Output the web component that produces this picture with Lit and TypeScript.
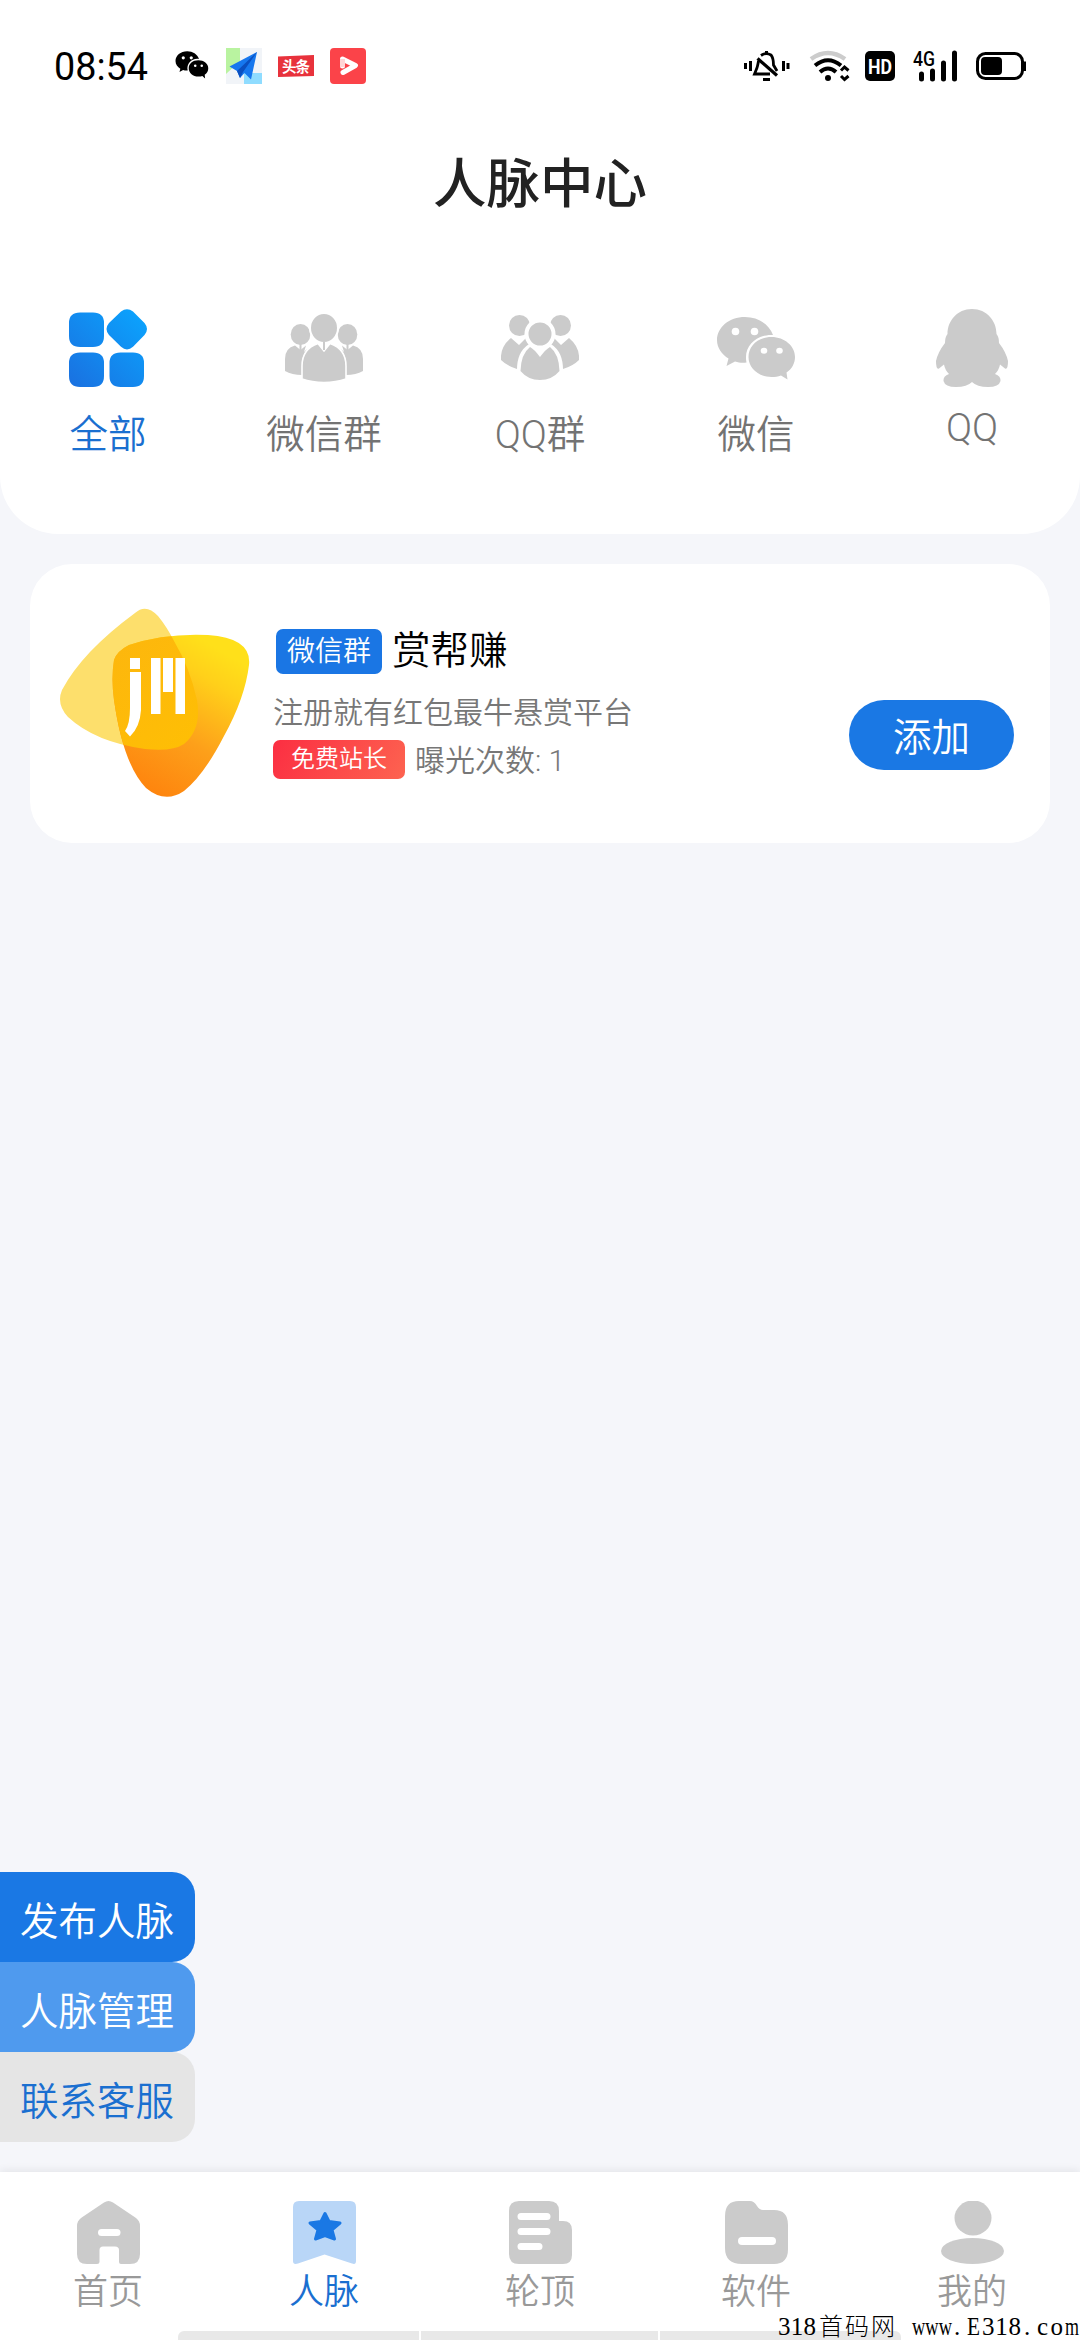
import { LitElement, html, css, svg } from "lit";
import { customElement, property } from "lit/decorators.js";

const ICONS: Record<string, any> = {
  all: svg`<svg viewBox="0 0 78 78" width="78" height="78"><defs><linearGradient id="g" x1="0" y1="1" x2="1" y2="0"><stop offset="0" stop-color="#1a70e0"/><stop offset="1" stop-color="#0aa6ff"/></linearGradient></defs><g fill="url(#g)"><path d="M11 3.500H24Q35 3.500 35 14V27Q35 38 24 38H11Q0 38 0 27V14Q0 3.500 11 3.500ZM11 43.500H24Q35 43.500 35 54V67Q35 78 24 78H11Q0 78 0 67V54Q0 43.500 11 43.500ZM51.500 43.500H64Q75 43.500 75 54V67Q75 78 64 78H51.500Q40.500 78 40.500 67V54Q40.500 43.500 51.500 43.500ZM52 2.500Q58 -2 64 2.500L75.500 14Q80.500 20 75.500 26L64 37.800Q58 43 52 37.800L40 26Q35 20 40 14Z"/></g></svg>`,
  group: svg`<svg viewBox="0 0 78 78" width="78" height="78" fill="#cbcbcb"><ellipse cx="15.500" cy="25.500" rx="9.800" ry="10.500"/><ellipse cx="62.500" cy="25.500" rx="9.800" ry="10.500"/><path d="M10 36.500L15.500 41L21 36.500L19 43L22 40Q17 47 17 55V66Q7 66 0 62V50Q0 39 10 36.500ZM68 36.500L62.500 41L57 36.500L59 43L56 40Q61 47 61 55V66Q71 66 78 62V50Q78 39 68 36.500Z"/><path d="M14.500 35h2v8h-2zM61.500 35h2v8h-2z"/><ellipse cx="39" cy="19" rx="14" ry="15" stroke="#fff" stroke-width="2"/><path d="M33 34.500L39 42L45 34.500Q61 40 61 57V70Q51 73.500 39 73.500T17 70V57Q17 40 33 34.500Z" stroke="#fff" stroke-width="1.600"/><path d="M38 33h2v8h-2z"/></svg>`,
  qqgroup: svg`<svg viewBox="0 0 78 78" width="78" height="78" fill="#cbcbcb"><circle cx="18.500" cy="16.500" r="10.500"/><circle cx="59.500" cy="16.500" r="10.500"/><path d="M10 29L18 36L25 29L34 40L16 60Q6 57 0 51Q-1 38 10 29ZM68 29L60 36L53 29L44 40L62 60Q72 57 78 51Q79 38 68 29Z"/><path d="M30 38L39 46L48 38Q59 45 58.500 62Q51 71 39 71T19.500 62Q19 45 30 38Z" stroke="#fff" stroke-width="7"/><path d="M29 38Q33 40 39 48Q45 40 49 38Q58 45 58.500 62Q51 71 39 71T19.500 62Q20 45 29 38Z"/><circle cx="39" cy="25" r="13.500" stroke="#fff" stroke-width="4"/></svg>`,
  wechat: svg`<svg viewBox="0 0 78 78" width="78" height="78"><g fill="#cbcbcb"><path d="M28 8C12 8 0 18.500 0 31C0 39 5 45.500 11.500 49.500L9.500 57L18 52.500C22 53.600 25 54.200 29.500 53.500C26 37 40 25 56 26C52 15 41 8 28 8Z"/><path d="M54.500 28C41 28 31.500 37 31.500 48C31.500 59 41.500 68 54.500 68C58 68 61 67.500 64 66.500L70.500 70.500L69.500 63.500C75 60 78 54 78 48C78 37 67.500 28 54.500 28Z"/></g><g fill="#fff"><circle cx="18.500" cy="22.500" r="3.800"/><circle cx="37.500" cy="22.500" r="3.800"/><ellipse cx="47" cy="41.700" rx="3.300" ry="3"/><ellipse cx="62.500" cy="41.700" rx="3.300" ry="3"/></g></svg>`,
  qq: svg`<svg viewBox="0 0 78 78" width="78" height="78" fill="#cbcbcb"><path d="M39 0C24 0 14.500 12 14.500 25Q12 28 12 34Q5 43 3 52Q3 61 6 59.500L11 55.500Q12 61 16 65Q10 67 10.500 72Q12 78 23 78Q34 78 39 73Q44 78 55 78Q66 78 67.500 72Q68 67 62 65Q66 61 67 55.500L72 59.500Q75 61 75 52Q73 43 66 34Q66 28 63.500 25C63.500 12 54 0 39 0Z"/></svg>`,
  home: svg`<svg viewBox="0 0 63 63" width="63" height="63"><path fill="#cbcbcb" d="M27 1.500Q31.500 -1.500 36 1.500L59 17Q63 20 63 25V53Q63 63 53 63H44Q42 63 42 61V49Q42 45.500 38 45.500H26Q22.500 45.500 22.500 49V61Q22.500 63 20 63H10Q0 63 0 53V25Q0 20 4 17Z"/><rect x="21" y="28" width="22.500" height="7" rx="3.500" fill="#fff"/></svg>`,
  mark: svg`<svg viewBox="0 0 63 63" width="63" height="63"><path fill="#b9d6f7" d="M6 0H57Q63 0 63 6V60Q63 64 59 62.500L31.500 53.500L5 62.500Q0 64 0 60V6Q0 0 6 0Z"/><path fill="#1a78e4" stroke="#1a78e4" stroke-width="3" stroke-linejoin="round" d="M32 12.500L36 20.500L47 22L39 28.800L41.500 38L32 34.500L22.500 38L25 28.800L17 22L28 20.500Z"/></svg>`,
  doc: svg`<svg viewBox="0 0 63 63" width="63" height="63"><path fill="#cbcbcb" d="M10 0H40Q50 0 50 10V20H54Q63 20 63 29V54Q63 63 54 63H10Q0 63 0 53V10Q0 0 10 0Z"/><path d="M12 15.500H38M12 30.500H38M12 45.500H30" stroke="#fff" stroke-width="7" stroke-linecap="round"/></svg>`,
  folder: svg`<svg viewBox="0 0 63 63" width="63" height="63"><path fill="#cbcbcb" d="M14 0H25Q29 0 32 5Q34.500 9 38 9H49Q63 9 63 24V48Q63 63 49 63H17Q0 63 0 47V15Q0 0 14 0Z"/><path d="M17 40H47" stroke="#fff" stroke-width="8" stroke-linecap="round"/></svg>`,
  user: svg`<svg viewBox="0 0 63 63" width="63" height="63" fill="#cbcbcb"><ellipse cx="32" cy="17" rx="18.500" ry="17.500"/><ellipse cx="31.500" cy="50" rx="31.500" ry="13"/></svg>`,
};

@customElement("status-bar")
class StatusBar extends LitElement {
  static styles = css`
    :host { display: flex; height: 132px; padding: 0 54px; align-items: center; justify-content: space-between; box-sizing: border-box; }
    svg { display: block; }
    .ui { font-family: Roboto, "Liberation Sans", sans-serif; }
    .cn { font-family: "Noto Sans CJK SC", sans-serif; font-weight: 700; }
  `;
  render() {
    return html`
      <svg width="320" height="50" viewBox="54 41 320 50">
        <text class="ui" x="54" y="79.500" font-size="38" font-weight="400" textLength="94" lengthAdjust="spacingAndGlyphs">08:54</text>
        <g transform="translate(175.500,48) scale(.42)"><path d="M28 8C12 8 0 18.500 0 31C0 39 5 45.500 11.500 49.500L9.500 57L18 52.500C22 53.600 27 54.200 29 53.500C25 37 40 23 56 26C52 15 41 8 28 8Z"/><path d="M54.500 29C41 29 31.500 37 31.500 48C31.500 59 41.500 68 54.500 68C58 68 61 67.500 64 66.500L70.500 72.500L69.500 63.500C75 60 78 54 78 48C78 37 67.500 29 54.500 29Z"/><g fill="#fff"><circle cx="18.500" cy="23.500" r="3.800"/><circle cx="37.500" cy="23.500" r="3.800"/><circle cx="47" cy="42" r="3"/><circle cx="62.500" cy="42" r="3"/></g></g>
        <rect x="226" y="48" width="36" height="36" fill="#f1f4f8"/><path d="M226 48h14v13l-14 13z" fill="#b9f3a0"/><path d="M244 73h18v11h-18z" fill="#8fdcff"/>
        <path d="M257 52L229.500 66.500L237 71L240 78L244.500 73L251 79.500Z" fill="#1677ee"/><path d="M257 52L237 71L240 78L243 72Z" fill="#0a4fc0"/>
        <path d="M278 56.500L314 55V76L278 77Z" fill="#e8323c"/><text class="cn" x="282" y="72" font-size="14.500" fill="#fff" textLength="28">头条</text>
        <rect x="330" y="48" width="36" height="36" rx="4" fill="#fb4349"/><path d="M342.500 66V59L355.500 65.500L343 72.500" fill="none" stroke="#fff" stroke-width="5" stroke-linejoin="round" stroke-linecap="round"/><path d="M342.500 59V67" fill="none" stroke="#ffd5d5" stroke-width="5"/>
      </svg>
      <svg width="290" height="50" viewBox="736 41 290 50" fill="none" stroke="#000">
        <path d="M745.500 63v6M750.500 61v10M783.500 61v10M788 63v6" stroke-width="3"/>
        <path d="M757.500 58.500L777 75.500" stroke-width="3.200"/><path d="M758.500 61Q757.500 67 756.500 69L754.500 74H770M761 55.500Q766 52 771 55Q773.500 58 773.500 65L777 71" stroke-width="2.800"/><path d="M766.500 51v4M763 79.500h7" stroke-width="3"/>
        <path d="M811 59Q828 47 845 59" stroke="#ccc" stroke-width="4.500"/><path d="M815 65.500Q828 55 841 65.500M820 72Q828 65 836 72" stroke-width="4"/><circle cx="828" cy="78" r="3" fill="#000" stroke="none"/><path d="M841 70.500L844.500 67L848.500 70.500M841 76L844.500 79.500L848.500 76" stroke-width="3"/>
        <rect x="865" y="51" width="30" height="30" rx="5" fill="#000" stroke="none"/><text class="ui" x="868" y="73.500" font-size="21" font-weight="700" fill="#fff" stroke="none" textLength="24" lengthAdjust="spacingAndGlyphs">HD</text>
        <text class="ui" x="913" y="66" font-size="20" font-weight="500" fill="#000" stroke="none" textLength="22" lengthAdjust="spacingAndGlyphs">4G</text>
        <path d="M921.500 74v5M932.500 71v8M943.500 63v16M954.500 53v26" stroke-width="5" stroke-linecap="round"/>
        <rect x="977.500" y="53.500" width="45" height="25" rx="8" stroke-width="3"/><rect x="981" y="57" width="21" height="18" rx="4" fill="#000" stroke="none"/><path d="M1024 61.500V71" stroke-width="4"/>
      </svg>`;
  }
}

@customElement("brand-logo")
class BrandLogo extends LitElement {
  static styles = css`:host { display: block; width: 190px; height: 190px; } svg { display: block; }`;
  render() {
    return html`<svg width="190" height="190" viewBox="60 608 190 190">
      <defs>
        <linearGradient id="a" x1=".8" y1=".1" x2=".35" y2="1"><stop offset="0" stop-color="#ffe01a"/><stop offset=".2" stop-color="#ffd01a"/><stop offset=".6" stop-color="#fda01a"/><stop offset="1" stop-color="#fe850e"/></linearGradient>
        <linearGradient id="b" x1="0" y1="0" x2=".8" y2="1"><stop offset="0" stop-color="#fdb60e"/><stop offset="1" stop-color="#ffc200"/></linearGradient>
        <path id="back" d="M135 613Q146 603 158 616Q167 627 174 641Q190 668 197 700Q202 729 184 744Q172 752 145 749Q95 742 68 717Q56 704 62 690Q82 652 135 613Z"/>
        <path id="front" d="M129 645Q165 633 208 635Q252 638 249 665Q245 698 224 736Q204 775 184 791Q165 804 146 788Q123 764 114 700Q111 678 114 660Q117 651 129 645Z"/>
        <clipPath id="c"><use href="#back"/></clipPath>
      </defs>
      <use href="#back" fill="#fddf6c"/><use href="#front" fill="url(#a)"/>
      <g clip-path="url(#c)"><use href="#front" fill="url(#b)"/></g>
      <g fill="#fff"><rect x="130" y="658" width="10" height="11"/><path d="M130 672H141V710Q140 727 130 736.500L125 731Q130 724 130 708Z"/><rect x="151" y="658" width="9.500" height="56"/><rect x="163" y="658" width="10" height="34"/><rect x="175.500" y="658" width="9.500" height="56"/></g>
    </svg>`;
  }
}

@customElement("icon-tab")
class IconTab extends LitElement {
  @property() icon = "";
  @property() label = "";
  static styles = css`
    :host { display: flex; flex: 1; flex-direction: column; align-items: center; color: var(--tab-color, #737373); }
    .icon { display: flex; }
    .label { margin-top: var(--tab-gap); font-size: var(--tab-size); line-height: 56px; white-space: nowrap; }
  `;
  render() {
    return html`<div class="icon">${ICONS[this.icon]}</div><div class="label">${this.label}</div>`;
  }
}

@customElement("app-root")
class AppRoot extends LitElement {
  static styles = css`
    :host { display: block; font-family: Roboto, "Noto Sans CJK SC", sans-serif; font-weight: 350; }
    .page { position: relative; display: flex; flex-direction: column; height: 2340px; overflow: hidden; background: #f5f6fa; }
    .header { height: 534px; background: #fff; border-radius: 0 0 58px 58px; }
    .title { margin: 0; height: 102px; line-height: 106px; text-align: center; font-size: 53.500px; font-weight: 500; color: #222; }
    .tabs { display: flex; padding-top: 75px; --tab-gap: 20px; --tab-size: 38.500px; }
    .active { --tab-color: #1a6fd0; }
    .raised { --tab-gap: 13px; }
    .card { display: flex; height: 279px; margin: 30px; padding: 44px 36px 0 30px; border-radius: 42px; background: #fff; box-sizing: border-box; }
    .info { flex: 1; margin-left: 23px; padding-top: 21px; }
    .row { display: flex; align-items: center; }
    .tag { width: 106px; height: 45px; margin-left: 3px; border-radius: 7px; background: #1a76e4; color: #fff; font-size: 28px; line-height: 46px; text-align: center; }
    .name { margin-left: 10px; font-size: 38.500px; line-height: 43px; color: #000; margin-top: -2px; }
    .desc { margin-top: 18px; font-size: 30px; line-height: 42px; color: #777; }
    .meta { margin-top: 6px; color: #777; font-size: 30px; line-height: 39px; }
    .meta span:last-child { position: relative; top: 1px; }
    .badge { width: 132px; height: 39px; margin-right: 10px; border-radius: 7px; background: linear-gradient(120deg, #fb2e42, #fd6350); color: #fff; font-size: 24px; text-align: center; }
    .add { width: 165px; height: 70px; margin-top: 92px; padding: 5px 0 0; border: 0; border-radius: 35px; background: #1a78e4; color: #fff; font: inherit; font-size: 38.500px; line-height: 65px; }
    .floats { position: absolute; left: 0; top: 1872px; width: 195px; }
    .float { height: 90px; padding-left: 20px; border-radius: 0 23px 23px 0; line-height: 100px; font-size: 38.500px; color: #fff; white-space: nowrap; box-sizing: border-box; }
    .primary { background: #1a78e4; }
    .soft { background: #4f9aee; }
    .plain { background: #e5e5e5; color: #1a6fd0; }
    .nav { display: flex; margin-top: auto; height: 168px; padding-top: 29px; background: #fff; box-shadow: 0 -2px 8px rgba(0, 0, 0, .07); box-sizing: border-box; --tab-gap: 1px; --tab-size: 35px; --tab-color: #999; }
    .nav .active { --tab-color: #1a6fd0; }
    .strip { position: absolute; left: 178px; bottom: 0; display: grid; grid-template-columns: 241px 237px 241px; gap: 2px; width: 723px; height: 9px; }
    .seg { background: #e8e8e8; }
    .seg:first-child { border-radius: 6px 0 0 0; }
    .seg:last-child { border-radius: 0 6px 0 0; }
    .mark { position: absolute; left: 778px; bottom: 0; display: block; font-family: "Liberation Serif", serif; font-weight: 400; }
    .cn { font-family: "Noto Sans CJK SC", sans-serif; font-weight: 300; }
  `;
  render() {
    return html`<div class="page">
      <header class="header">
        <status-bar></status-bar>
        <h1 class="title">人脉中心</h1>
        <div class="tabs">
          <icon-tab class="active" icon="all" label="全部"></icon-tab>
          <icon-tab icon="group" label="微信群"></icon-tab>
          <icon-tab icon="qqgroup" label="QQ群"></icon-tab>
          <icon-tab icon="wechat" label="微信"></icon-tab>
          <icon-tab class="raised" icon="qq" label="QQ"></icon-tab>
        </div>
      </header>
      <section class="card">
        <brand-logo></brand-logo>
        <div class="info">
          <div class="row"><span class="tag">微信群</span><span class="name">赏帮赚</span></div>
          <div class="desc">注册就有红包最牛悬赏平台</div>
          <div class="row meta"><span class="badge">免费站长</span><span>曝光次数: 1</span></div>
        </div>
        <button class="add">添加</button>
      </section>
      <div class="floats">
        <div class="float primary">发布人脉</div>
        <div class="float soft">人脉管理</div>
        <div class="float plain">联系客服</div>
      </div>
      <nav class="nav">
        <icon-tab icon="home" label="首页"></icon-tab>
        <icon-tab class="active" icon="mark" label="人脉"></icon-tab>
        <icon-tab icon="doc" label="轮顶"></icon-tab>
        <icon-tab icon="folder" label="软件"></icon-tab>
        <icon-tab icon="user" label="我的"></icon-tab>
      </nav>
      <div class="strip"><div class="seg"></div><div class="seg"></div><div class="seg"></div></div>
      <svg class="mark" width="302" height="40" viewBox="0 0 302 40">
        <text x="0" y="35" font-size="25" textLength="38">318</text>
        <text class="cn" x="41" y="35" font-size="24" textLength="76">首码网</text>
        <text x="134" y="35" font-size="25" textLength="40" lengthAdjust="spacingAndGlyphs">www</text>
        <text x="176" y="35" font-size="25">.</text>
        <text x="189" y="35" font-size="25" textLength="13" lengthAdjust="spacingAndGlyphs">E</text>
        <text x="204" y="35" font-size="25" textLength="39">318</text>
        <text x="246" y="35" font-size="25">.</text>
        <text x="259" y="35" font-size="25" textLength="26">co</text>
        <text x="287" y="35" font-size="25" textLength="14" lengthAdjust="spacingAndGlyphs">m</text>
      </svg>
    </div>`;
  }
}
